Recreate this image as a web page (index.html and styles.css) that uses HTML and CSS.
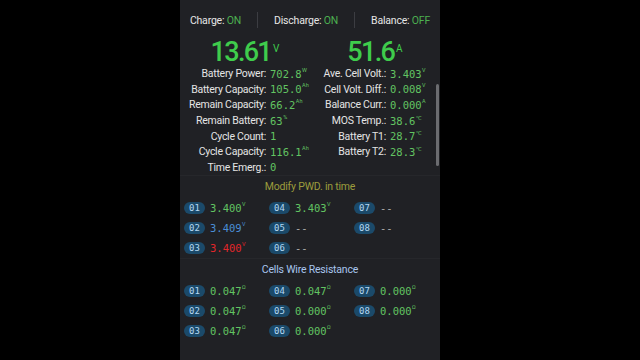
FILE: index.html
```html
<!DOCTYPE html>
<html>
<head>
<meta charset="utf-8">
<link rel="stylesheet" href="styles.css">
</head>
<body>
<div class="screen">
  <div class="status">
    <span class="st">Charge: <span class="on">ON</span></span>
    <i class="sep"></i>
    <span class="st">Discharge: <span class="on">ON</span></span>
    <i class="sep"></i>
    <span class="st">Balance: <span class="on">OFF</span></span>
  </div>

  <div class="big">
    <div class="bigv">13.61<span class="bu">V</span></div>
    <div class="bigv">51.6<span class="bu">A</span></div>
  </div>

  <div class="info">
    <span class="lb">Battery Power:</span><span class="vl">702.8<span class="u">W</span></span>
    <span class="lb">Ave. Cell Volt.:</span><span class="vl">3.403<span class="u">V</span></span>

    <span class="lb">Battery Capacity:</span><span class="vl">105.0<span class="u">Ah</span></span>
    <span class="lb">Cell Volt. Diff.:</span><span class="vl">0.008<span class="u">V</span></span>

    <span class="lb">Remain Capacity:</span><span class="vl">66.2<span class="u">Ah</span></span>
    <span class="lb">Balance Curr.:</span><span class="vl">0.000<span class="u">A</span></span>

    <span class="lb">Remain Battery:</span><span class="vl">63<span class="u">%</span></span>
    <span class="lb">MOS Temp.:</span><span class="vl">38.6<span class="u">℃</span></span>

    <span class="lb">Cycle Count:</span><span class="vl">1</span>
    <span class="lb">Battery T1:</span><span class="vl">28.7<span class="u">℃</span></span>

    <span class="lb">Cycle Capacity:</span><span class="vl">116.1<span class="u">Ah</span></span>
    <span class="lb">Battery T2:</span><span class="vl">28.3<span class="u">℃</span></span>

    <span class="lb">Time Emerg.:</span><span class="vl">0</span>
    <span class="lb"></span><span class="vl"></span>
  </div>

  <div class="sec">
    <div class="sec-title pwd">Modify PWD. in time</div>
    <div class="cells">
      <div class="cell"><span class="badge">01</span><span class="cv">3.400<span class="u">V</span></span></div>
      <div class="cell"><span class="badge">04</span><span class="cv">3.403<span class="u">V</span></span></div>
      <div class="cell"><span class="badge">07</span><span class="cv dash">--</span></div>
      <div class="cell"><span class="badge">02</span><span class="cv blue">3.409<span class="u">V</span></span></div>
      <div class="cell"><span class="badge">05</span><span class="cv dash">--</span></div>
      <div class="cell"><span class="badge">08</span><span class="cv dash">--</span></div>
      <div class="cell"><span class="badge">03</span><span class="cv red">3.400<span class="u">V</span></span></div>
      <div class="cell"><span class="badge">06</span><span class="cv dash">--</span></div>
      <div class="cell"></div>
    </div>
  </div>

  <div class="sec">
    <div class="sec-title res">Cells Wire Resistance</div>
    <div class="cells">
      <div class="cell"><span class="badge">01</span><span class="cv">0.047<span class="u">Ω</span></span></div>
      <div class="cell"><span class="badge">04</span><span class="cv">0.047<span class="u">Ω</span></span></div>
      <div class="cell"><span class="badge">07</span><span class="cv">0.000<span class="u">Ω</span></span></div>
      <div class="cell"><span class="badge">02</span><span class="cv">0.047<span class="u">Ω</span></span></div>
      <div class="cell"><span class="badge">05</span><span class="cv">0.000<span class="u">Ω</span></span></div>
      <div class="cell"><span class="badge">08</span><span class="cv">0.000<span class="u">Ω</span></span></div>
      <div class="cell"><span class="badge">03</span><span class="cv">0.047<span class="u">Ω</span></span></div>
      <div class="cell"><span class="badge">06</span><span class="cv">0.000<span class="u">Ω</span></span></div>
      <div class="cell"></div>
    </div>
  </div>

  <div class="scroll"></div>
</div>
</body>
</html>
```

FILE: styles.css
```css
html, body {
  margin: 0;
  padding: 0;
  background: #000;
}
body {
  width: 640px;
  height: 360px;
  overflow: hidden;
  font-family: Roboto, "Liberation Sans", sans-serif;
}
.screen {
  position: relative;
  width: 260px;
  height: 360px;
  margin-left: 180px;
  background: #202125;
  overflow: hidden;
}
.status {
  display: flex;
  justify-content: center;
  align-items: center;
  height: 20px;
  padding-top: 10px;
  font-size: 10.5px;
  letter-spacing: -0.2px;
  color: #e6e6e6;
}
.st { white-space: nowrap; }
.on { color: #4cb050; }
.sep {
  display: block;
  width: 1px;
  height: 16px;
  margin: 0 16px;
  background: #3c3d42;
}
.big {
  display: flex;
  height: 36px;
  align-items: flex-end;
}
.bigv {
  flex: 1;
  text-align: center;
  font-size: 27px;
  font-weight: 500;
  letter-spacing: -1.7px;
  line-height: 28px;
  color: #3fcc4c;
}
.bu {
  font-size: 10px;
  font-weight: 400;
  letter-spacing: 0;
  vertical-align: top;
  position: relative;
  top: -3px;
  margin-left: 2px;
}
.info {
  display: grid;
  grid-template-columns: 86px 46px 66px 50px;
  column-gap: 4px;
  grid-auto-rows: 15.6px;
  align-items: center;
}
.lb {
  text-align: right;
  white-space: nowrap;
  font-size: 10.5px;
  letter-spacing: -0.25px;
  color: #e4e4e4;
}
.vl {
  white-space: nowrap;
  font-family: "DejaVu Sans Mono", "Liberation Mono", monospace;
  font-size: 10.5px;
  color: #62c462;
}
.u {
  font-family: Roboto, "Liberation Sans", sans-serif;
  font-size: 5.5px;
  vertical-align: top;
  position: relative;
  top: -1px;
  margin-left: 0.5px;
}
.sec {
  border-top: 1px solid #26272b;
}
.sec-title {
  height: 22px;
  line-height: 22px;
  text-align: center;
  font-size: 10.5px;
  letter-spacing: -0.2px;
}
.pwd { color: #9c9c3c; }
.res { color: #a9c6ee; }
.cells {
  display: grid;
  grid-template-columns: repeat(3, 85px);
  grid-auto-rows: 20px;
  padding-left: 4px;
  align-items: center;
}
.cell {
  display: flex;
  align-items: center;
  gap: 5px;
}
.badge {
  display: block;
  width: 21px;
  height: 12px;
  line-height: 12px;
  border-radius: 6px;
  background: #1b4a6a;
  color: #b4d8f2;
  text-align: center;
  font-family: "DejaVu Sans Mono", monospace;
  font-size: 9px;
}
.cv {
  font-family: "DejaVu Sans Mono", "Liberation Mono", monospace;
  font-size: 10.5px;
  color: #62c462;
  white-space: nowrap;
}
.cv.blue { color: #4a8ed6; }
.cv.red { color: #e3262a; }
.cv.dash { color: #b0b0b0; }
.scroll {
  position: absolute;
  right: 1px;
  top: 84px;
  width: 3px;
  height: 82px;
  border-radius: 2px;
  background: #6b6c70;
}
```
